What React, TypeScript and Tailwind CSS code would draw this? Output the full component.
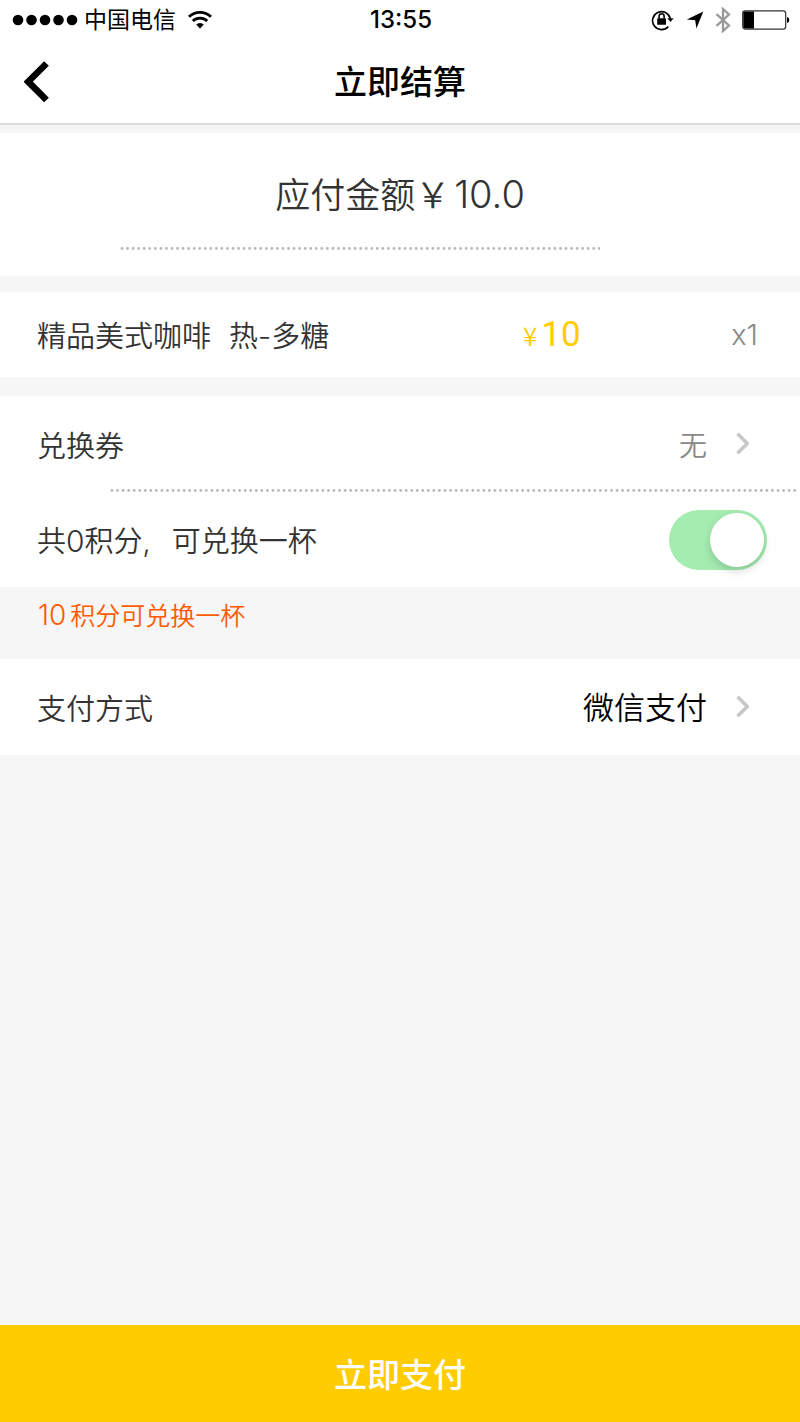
import { useState } from "react";

function SignalDots() {
  return (
    <svg width="66" height="12" viewBox="0 0 66 12" aria-hidden="true">
      {[6, 19.5, 33, 46.5, 60].map((x) => (
        <circle key={x} cx={x} cy="6" r="5.3" fill="#000" />
      ))}
    </svg>
  );
}

function WifiIcon() {
  return (
    <svg width="24" height="18" viewBox="0 0 24 18" aria-hidden="true">
      <g fill="none" stroke="#000" strokeWidth="2.8">
        <path d="M1 5.800a16 16 0 0 1 22 0" />
        <path d="M4.800 10a10.400 10.400 0 0 1 14.400 0" />
      </g>
      <path d="M8.200 13.500a5.400 5.400 0 0 1 7.600 0L12 17.500z" fill="#000" />
    </svg>
  );
}

function RotationLockIcon() {
  return (
    <svg width="24" height="22" viewBox="0 0 24 22" aria-hidden="true">
      <path d="M17.3 17.6A9 9 0 1 1 19.3 9.5" fill="none" stroke="#000" strokeWidth="1.6" />
      <path d="M16.400 9.300h6.200l-3.100 3.600z" fill="#000" />
      <rect x="6.200" y="9.200" width="8.800" height="6.600" rx="0.6" fill="#000" />
      <path d="M8.100 9.600V7.200a2.500 2.500 0 0 1 5 0v2.400" fill="none" stroke="#000" strokeWidth="1.6" />
    </svg>
  );
}

function LocationIcon() {
  return (
    <svg width="18" height="18" viewBox="0 0 18 18" aria-hidden="true">
      <path d="M17.300 0.600 10.400 17.600 9.200 9.200 0.800 8.400z" fill="#000" />
    </svg>
  );
}

function BluetoothIcon() {
  return (
    <svg width="16" height="26" viewBox="0 0 16 26" aria-hidden="true">
      <path
        d="M1.500 7.200 14 18.500 8 24V2l6 5.500L1.500 18.800"
        fill="none"
        stroke="#999"
        strokeWidth="2.300"
        strokeLinejoin="miter"
      />
    </svg>
  );
}

function BatteryIcon() {
  return (
    <svg width="48" height="20" viewBox="0 0 48 20" aria-hidden="true">
      <rect x="0.7" y="0.9" width="43" height="18.2" rx="2.6" fill="none" stroke="#333" strokeWidth="1.2" />
      <path d="M2.6 1.6H12v16.8H2.6a1.3 1.3 0 0 1-1.3-1.3V2.9a1.3 1.3 0 0 1 1.3-1.3z" fill="#000" />
      <path d="M45 7c3 .6 3 5.400 0 6z" fill="#000" />
    </svg>
  );
}

function BackIcon() {
  return (
    <svg width="26" height="42" viewBox="0 0 26 42" aria-hidden="true">
      <path d="M22.500 2.500 4.200 20.700 22.500 39" fill="none" stroke="#000" strokeWidth="6.600" />
    </svg>
  );
}

function Chevron() {
  return (
    <svg width="16" height="24" viewBox="0 0 16 24" className="shrink-0" aria-hidden="true">
      <path d="M2.500 1.700 12.300 11.500 2.500 21.300" fill="none" stroke="#c7c7c7" strokeWidth="3.600" strokeLinejoin="round" />
    </svg>
  );
}

function DottedLine({ className }: { className: string }) {
  return (
    <svg className={className} height="3" aria-hidden="true">
      <line x1="2" y1="1.500" x2="100%" y2="1.500" stroke="#b8b8b8" strokeWidth="2.800" strokeDasharray="0 5.550" strokeLinecap="round" />
    </svg>
  );
}

export default function App() {
  const [usePoints, setUsePoints] = useState(true);

  return (
    <div className="flex min-h-screen flex-col bg-[#f6f6f6] font-['Inter','Noto_Sans_CJK_SC',sans-serif] text-[#333]">
      <header className="border-b-2 border-[#dcdcdc] bg-white text-black">
        <div className="grid h-10 grid-cols-[1fr_auto_1fr] items-center pr-2.5 pl-3">
          <div className="flex items-center gap-1.5">
            <SignalDots />
            <span className="text-[23px] leading-none">中国电信</span>
            <span className="ml-1.5">
              <WifiIcon />
            </span>
          </div>
          <time className="text-[24px] leading-none font-medium">13:55</time>
          <div className="flex items-center justify-end gap-[11px]">
            <RotationLockIcon />
            <LocationIcon />
            <BluetoothIcon />
            <BatteryIcon />
          </div>
        </div>
        <div className="grid h-[83px] grid-cols-[1fr_auto_1fr] items-center">
          <button type="button" aria-label="返回" className="justify-self-start pl-6">
            <BackIcon />
          </button>
          <h1 className="pt-0.5 text-[33px] leading-none font-medium">立即结算</h1>
        </div>
      </header>

      <main className="font-[350]">
        <section className="mt-2 h-[143px] bg-white pt-10">
          <p className="text-center text-[35px] leading-[42px]">
            应付金额￥<span className="ml-1 text-[38px] font-light">10.0</span>
          </p>
          <DottedLine className="mt-[31px] ml-[15%] w-[60%]" />
        </section>

        <section className="mt-4 grid h-[85px] grid-cols-[486px_1fr_auto] items-center bg-white pr-[42px] pl-[37px] text-[29px]">
          <h2 className="flex gap-[18px] pt-1 leading-none">
            <span>精品美式咖啡</span>
            <span>热-多糖</span>
          </h2>
          <p className="flex items-baseline gap-1 leading-none text-[#fc0]">
            <span className="font-['Noto_Sans_CJK_SC',sans-serif] text-[26px]">¥</span>
            <span className="font-['Roboto',sans-serif] text-[35px] font-normal">10</span>
          </p>
          <span className="leading-none font-light text-[#888]">x1</span>
        </section>

        <section className="mt-[19px] bg-white">
          <button type="button" className="flex h-[93px] w-full items-center pt-0.5 pr-[49px] pl-[37px] text-[29px] leading-none">
            <span className="pt-1.5">兑换券</span>
            <span className="mr-7 ml-auto pt-1 text-[28px] text-[#888]">无</span>
            <Chevron />
          </button>
          <DottedLine className="ml-[110px] w-[calc(100%-110px)]" />
          <div className="flex h-[95px] items-center justify-between pr-[33px] pl-[37px]">
            <label htmlFor="points" className="pt-0.5 text-[29px] leading-none">
              共<span className="text-[30px] font-light">0</span>积分,<span className="ml-[21px]">可兑换一杯</span>
            </label>
            <input
              id="points"
              type="checkbox"
              role="switch"
              checked={usePoints}
              onChange={(e) => setUsePoints(e.target.checked)}
              className="flex h-[60px] w-[98px] appearance-none items-center rounded-full bg-[#ddd] px-[3px] before:size-[54px] before:rounded-full before:bg-white before:shadow-[0_4px_8px_rgba(0,0,0,0.16)] checked:justify-end checked:bg-[#a5ecb1]"
            />
          </div>
        </section>

        <p className="h-[72px] pt-[15px] pl-[38px] text-[25px] leading-[26px] text-[#ff5a00]">
          <span className="mr-1 text-[28px] font-light">10</span>积分可兑换一杯
        </p>

        <section className="bg-white">
          <button type="button" className="flex h-24 w-full items-center pr-[49px] pl-[37px] text-[29px] leading-none">
            <span className="pt-1">支付方式</span>
            <span className="mr-7 ml-auto text-[31px] text-black">微信支付</span>
            <Chevron />
          </button>
        </section>
      </main>

      <footer className="mt-auto">
        <button type="button" className="h-[97px] w-full bg-[#fc0] pt-1 text-[33px] leading-none font-medium text-white">
          立即支付
        </button>
      </footer>
    </div>
  );
}
